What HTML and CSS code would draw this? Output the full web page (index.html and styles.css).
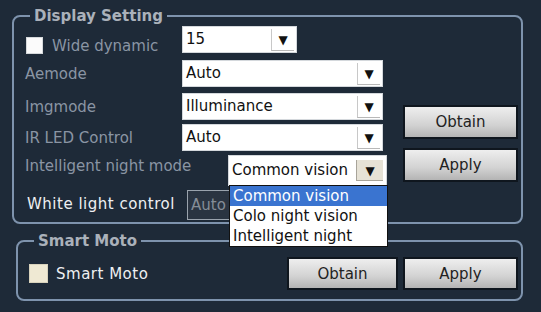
FILE: index.html
```html
<!DOCTYPE html>
<html lang="en">
<head>
    <meta charset="UTF-8">
    <title>Display Setting</title>
    <link rel="stylesheet" href="styles.css">
</head>
<body>

    <div class="page">
        <!-- Display settings -->
        <fieldset class="group display">
            <legend>Display Setting</legend>
            <div class="display-body">
                <div class="form-grid">
                    <label class="check-label"><span class="check"></span>Wide dynamic</label>
                    <div class="select small"><span class="value">15</span><span class="arrow">&#9660;</span></div>

                    <label>Aemode</label>
                    <div class="select"><span class="value">Auto</span><span class="arrow">&#9660;</span></div>

                    <label>Imgmode</label>
                    <div class="select"><span class="value">Illuminance</span><span class="arrow">&#9660;</span></div>

                    <label>IR LED Control</label>
                    <div class="select"><span class="value">Auto</span><span class="arrow">&#9660;</span></div>

                    <label class="night-label">Intelligent night mode</label>
                    <div class="select night open">
                        <span class="value">Common vision</span><span class="arrow">&#9660;</span>
                        <ul class="options">
                            <li class="selected">Common vision</li>
                            <li>Colo night vision</li>
                            <li>Intelligent night</li>
                        </ul>
                    </div>

                    <label class="bright">White light control</label>
                    <div class="select disabled"><span class="value">Auto</span></div>
                </div>

                <div class="actions">
                    <button class="btn">Obtain</button>
                    <button class="btn">Apply</button>
                </div>
            </div>
        </fieldset>

        <!-- Smart moto -->
        <fieldset class="group moto">
            <legend>Smart Moto</legend>
            <div class="moto-body">
                <label class="check-label bright"><span class="check cream"></span>Smart Moto</label>
                <div class="moto-actions">
                    <button class="btn small-btn">Obtain</button>
                    <button class="btn">Apply</button>
                </div>
            </div>
        </fieldset>
    </div>

</body>
</html>
```

FILE: styles.css
```css
/* Global styles */
body, html {
    margin: 0;
    padding: 0;
    background-color: #1e2a38;
    font-family: "DejaVu Sans", Verdana, sans-serif;
    font-size: 15px;
}

.page {
    padding: 6px 0 0 12px;
    width: 511px;
}

/* Group boxes */
.group {
    margin: 0;
    border: 2px solid #7e93ad;
    border-radius: 8px;
    padding: 0 3px 2px 11px;
}

.group legend {
    margin-left: 5px;
    padding: 0 4px;
    font-weight: bold;
    font-size: 15px;
    line-height: 20px;
    color: #aab1ba;
}

.moto {
    margin: 7px 0 0 4px;
    padding: 6px 3px 9px 11px;
}

/* Display setting layout */
.display-body {
    display: flex;
}

.form-grid {
    display: grid;
    grid-template-columns: 157px auto;
    grid-template-rows: 34px 33px 31px 31px 35px 30px;
    align-items: start;
}

label {
    color: #8a95a4;
    display: flex;
    align-items: center;
    height: 27px;
    white-space: nowrap;
}

.check-label {
    gap: 9px;
    padding-top: 6px;
    padding-left: 1px;
}

.night-label {
    height: 22px;
}

.bright {
    color: #eef0f2;
    letter-spacing: 0.5px;
    padding-left: 2px;
}

.check {
    width: 15px;
    height: 15px;
    background-color: #fbfbfb;
    border: 1px solid #d6d9dc;
}

.check.cream {
    width: 17px;
    height: 17px;
    background-color: #efe9d3;
    border-color: #d8d2bc;
}

/* Fake select boxes */
.select {
    position: relative;
    display: flex;
    width: 201px;
    height: 27px;
    box-sizing: border-box;
    background-color: #ffffff;
    border: 1px solid #d4d8dc;
    color: #111;
}

.select.small {
    width: 115px;
}

.select .value {
    flex: 1;
    padding-left: 3px;
    line-height: 25px;
}

.select .arrow {
    width: 22px;
    margin: 2px 2px 1px 0;
    border-left: 1px solid #c8c8c8;
    border-bottom: 1px solid #b8b8b8;
    font-size: 12px;
    text-align: center;
    line-height: 22px;
}

.select.night {
    margin-left: 46px;
    width: 159px;
    height: 31px;
}

.select.night .value {
    line-height: 29px;
}

.select.night .arrow {
    width: 26px;
    margin: 4px 3px 4px 0;
    background-color: #e6e2d6;
    border-color: #a8a49a;
    line-height: 22px;
}

.select.disabled {
    margin-left: 5px;
    height: 30px;
    width: 60px;
    background-color: #2a3441;
    border: 1px solid #9aa3ad;
    color: #858d97;
}

.select.disabled .value {
    flex: none;
    line-height: 28px;
}

/* Open dropdown list */
.options {
    position: absolute;
    top: 100%;
    left: 0;
    width: 159px;
    box-sizing: border-box;
    margin: 0;
    padding: 0;
    list-style: none;
    background-color: #ffffff;
    border: 1px solid #111;
    z-index: 2;
}

.options li {
    height: 20px;
    line-height: 20px;
    padding-left: 3px;
    color: #111;
}

.options li.selected {
    background-color: #3a74d0;
    color: #ffffff;
}

/* Buttons */
.actions {
    margin-left: auto;
    padding-top: 79px;
    display: flex;
    flex-direction: column;
    gap: 9px;
}

.btn {
    width: 115px;
    height: 34px;
    border: 2px solid #0f161e;
    background: linear-gradient(#eeeeee, #d2d2d2 60%, #b4b4b4);
    font-family: "DejaVu Sans", Verdana, sans-serif;
    font-size: 15px;
    color: #222;
    padding: 0;
}

/* Smart moto row */
.moto-body {
    display: flex;
    align-items: center;
}

.moto-body .check-label {
    padding-top: 0;
    padding-left: 0;
    gap: 8px;
}

.moto-actions {
    margin-left: auto;
    display: flex;
    gap: 5px;
}

.moto-actions .btn {
    height: 33px;
}

.moto-actions .small-btn {
    width: 111px;
}
```
